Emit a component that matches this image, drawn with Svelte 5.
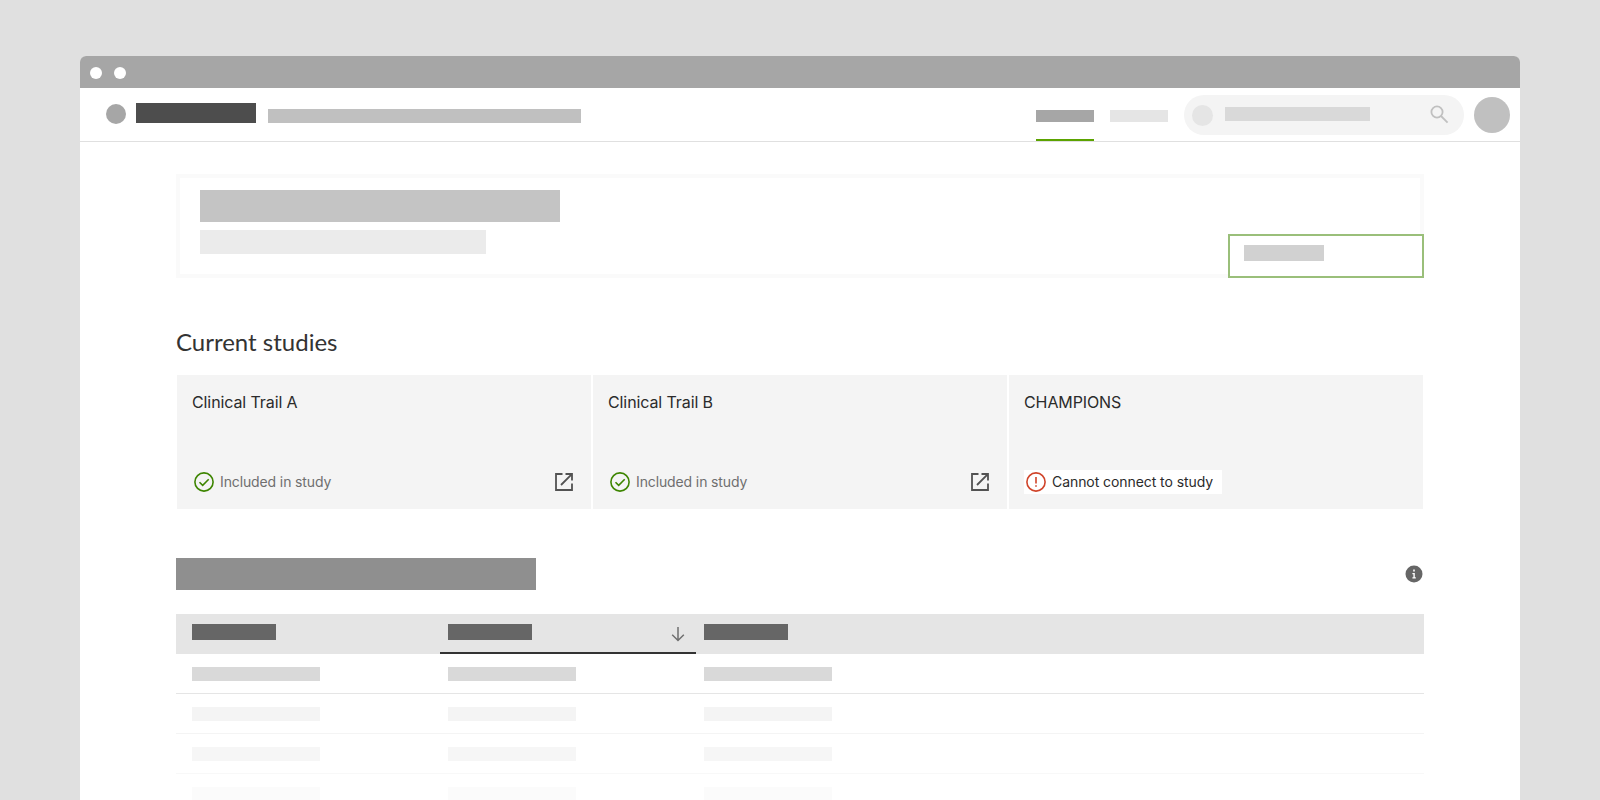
<script>
  const studies = [
    { name: 'Clinical Trail A', ok: true, status: 'Included in study' },
    { name: 'Clinical Trail B', ok: true, status: 'Included in study' },
    { name: 'CHAMPIONS', ok: false, status: 'Cannot connect to study' }
  ];
  const rows = ['r1', 'r2', 'r3', 'r4'];
  const cols = [0, 1, 2];
</script>

<div class="window">
  <div class="titlebar">
    <span class="dot"></span>
    <span class="dot"></span>
  </div>

  <header class="topbar">
    <span class="logo"></span>
    <span class="brand"></span>
    <span class="tagline"></span>
    <nav class="tabs">
      <div class="tab active"><span></span></div>
      <div class="tab"><span></span></div>
    </nav>
    <div class="search">
      <span class="search-dot"></span>
      <span class="search-text"></span>
      <svg class="search-icon" width="20" height="20" viewBox="0 0 20 20" fill="none" stroke="#c0c0c0" stroke-width="1.8">
        <circle cx="8" cy="8" r="5.6" />
        <path d="M12 12l6.6 6.6" />
      </svg>
    </div>
    <span class="avatar"></span>
  </header>

  <main class="content">
    <section class="hero">
      <div>
        <div class="hero-title"></div>
        <div class="hero-sub"></div>
      </div>
      <div class="hero-btn"><span></span></div>
    </section>

    <h2>Current studies</h2>

    <div class="cards">
      {#each studies as study}
        <div class="card">
          <div class="card-name">{study.name}</div>
          <div class="card-foot">
            {#if study.ok}
              <div class="status">
                <svg width="20" height="20" viewBox="0 0 20 20" fill="none" stroke="#3d8500" stroke-width="1.6">
                  <circle cx="10" cy="10" r="9.1" />
                  <path d="M5.5 10.2l3.2 3.2 6-6.2" />
                </svg>
                <span>{study.status}</span>
              </div>
              <svg class="ext" width="18" height="18" viewBox="0 0 18 18" fill="none" stroke="#525252" stroke-width="1.8">
                <path d="M7.5 1H1v16h16v-6.5" />
                <path d="M6 12L16.6 1.4M10.5 1H17v6.5" />
              </svg>
            {:else}
              <div class="status error">
                <svg width="20" height="20" viewBox="0 0 20 20" fill="none" stroke="#d0442a" stroke-width="1.6">
                  <circle cx="10" cy="10" r="9.1" />
                  <path d="M10 5v6.4M10 13.2v1.6" />
                </svg>
                <span>{study.status}</span>
              </div>
            {/if}
          </div>
        </div>
      {/each}
    </div>

    <div class="section-head">
      <div class="section-title"></div>
      <svg class="info" width="18" height="18" viewBox="0 0 18 18">
        <circle cx="9" cy="9" r="8.5" fill="#666" />
        <path d="M7.4 8h2.4v4.2h1v1.2H7.4v-1.2h1V9.2h-1zM8.2 4.6h1.6v1.9H8.2z" fill="#fff" />
      </svg>
    </div>

    <div class="table">
      <div class="row head">
        {#each cols as c}
          <div class="cell" class:sorted={c === 1}>
            <span class="th"></span>
            {#if c === 1}
              <svg class="sort" width="14" height="16" viewBox="0 0 14 16" fill="none" stroke="#6f6f6f" stroke-width="1.5">
                <path d="M7 1v13.5M1.2 8.8L7 14.5l5.8-5.7" />
              </svg>
            {/if}
          </div>
        {/each}
      </div>
      {#each rows as r}
        <div class="row body {r}">
          {#each cols as c}
            <div class="cell"><span class="td"></span></div>
          {/each}
        </div>
      {/each}
    </div>
  </main>
</div>

<style>
  :global(body) {
    background: #e0e0e0;
    height: 800px;
    overflow: hidden;
    font-family: Inter, "Liberation Sans", sans-serif;
  }

  .window {
    margin: 56px 80px 0;
    height: 744px;
    background: #fff;
    border-radius: 6px 6px 0 0;
    overflow: hidden;
  }

  .titlebar {
    height: 32px;
    background: #a6a6a6;
    display: flex;
    align-items: center;
    gap: 12px;
    padding: 2px 0 0 10px;
    box-sizing: border-box;
  }
  .dot {
    width: 12px;
    height: 12px;
    border-radius: 50%;
    background: #fff;
  }

  .topbar {
    height: 53px;
    border-bottom: 1px solid #e0e0e0;
    display: flex;
    position: relative;
  }
  .logo {
    width: 20px;
    height: 20px;
    border-radius: 50%;
    background: #a6a6a6;
    margin: 16px 10px 0 26px;
  }
  .brand {
    width: 120px;
    height: 20px;
    background: #4d4d4d;
    margin-top: 15px;
  }
  .tagline {
    width: 313px;
    height: 14px;
    background: #c0c0c0;
    margin: 21px 0 0 12px;
  }
  .tabs {
    display: flex;
    gap: 16px;
    margin-left: auto;
  }
  .tab {
    width: 58px;
    padding-top: 22px;
  }
  .tab span {
    display: block;
    height: 12px;
    background: #e5e5e5;
  }
  .tab.active {
    border-bottom: 2px solid #5ba300;
    box-sizing: border-box;
  }
  .tab.active span {
    background: #a6a6a6;
  }
  .search {
    width: 280px;
    height: 40px;
    border-radius: 20px;
    background: #f4f4f4;
    margin: 7px 0 0 16px;
    display: flex;
    align-items: center;
    padding: 0 15px 0 8px;
    box-sizing: border-box;
  }
  .search-dot {
    width: 21px;
    height: 21px;
    border-radius: 50%;
    background: #e5e5e5;
  }
  .search-text {
    width: 145px;
    height: 14px;
    background: #d9d9d9;
    margin: -2px 0 0 12px;
  }
  .search-icon {
    margin: -2px 0 0 auto;
  }
  .avatar {
    width: 36px;
    height: 36px;
    border-radius: 50%;
    background: #c0c0c0;
    margin: 9px 10px 0 10px;
  }

  .content {
    padding: 32px 96px 0;
  }

  .hero {
    height: 104px;
    box-sizing: border-box;
    border: 4px solid #fafafa;
    padding: 12px 0 0 20px;
    display: flex;
    justify-content: space-between;
  }
  .hero-title {
    width: 360px;
    height: 32px;
    background: #c4c4c4;
  }
  .hero-sub {
    width: 286px;
    height: 24px;
    background: #ebebeb;
    margin-top: 8px;
  }
  .hero-btn {
    width: 196px;
    height: 44px;
    box-sizing: border-box;
    border: 2px solid #9abf7a;
    background: #fff;
    align-self: flex-end;
    margin: 0 -4px -4px 0;
    padding: 9px 14px;
  }
  .hero-btn span {
    display: block;
    width: 80px;
    height: 16px;
    background: #d1d1d1;
  }

  h2 {
    font-family: Lato, Inter, sans-serif;
    font-size: 24px;
    line-height: 32px;
    font-weight: 400;
    color: #333;
    margin: 48px 0 17px;
  }

  .cards {
    display: grid;
    grid-template-columns: repeat(3, 1fr);
    gap: 2px;
    margin: 0 1px;
  }
  .card {
    height: 134px;
    background: #f4f4f4;
    padding: 0 16px 0 15px;
    display: flex;
    flex-direction: column;
    justify-content: space-between;
  }
  .card-name {
    font-size: 16px;
    line-height: 22px;
    letter-spacing: -0.1px;
    color: #2b2b2b;
    margin-top: 16px;
  }
  .card-foot {
    display: flex;
    justify-content: space-between;
    align-items: center;
    margin-bottom: 15px;
    height: 24px;
  }
  .status {
    display: flex;
    align-items: center;
    gap: 6px;
    font-size: 14px;
    line-height: 24px;
    letter-spacing: -0.12px;
    color: #6f6f6f;
    margin-left: 2px;
  }
  .status.error {
    color: #2b2b2b;
    background: #fff;
    margin-left: 0;
    padding: 0 9px 0 2px;
    letter-spacing: -0.07px;
  }
  .ext {
    margin-right: 2px;
  }

  .section-head {
    display: flex;
    justify-content: space-between;
    align-items: center;
    margin-top: 49px;
    height: 32px;
  }
  .section-title {
    width: 360px;
    height: 32px;
    background: #8f8f8f;
  }
  .info {
    margin-right: 1px;
  }

  .table {
    margin-top: 24px;
  }
  .row {
    display: grid;
    grid-template-columns: 264px 256px 1fr;
    height: 40px;
    box-sizing: border-box;
  }
  .head {
    background: #e5e5e5;
  }
  .cell {
    padding: 0 8px;
    display: flex;
    align-items: flex-start;
    justify-content: space-between;
    position: relative;
  }
  .cell:first-child {
    padding-left: 16px;
  }
  .th {
    width: 84px;
    height: 16px;
    background: #666;
    margin-top: 10px;
  }
  .sort {
    margin: 12px 3px 0 0;
  }
  .sorted {
    border-bottom: 2px solid #333;
  }
  .td {
    width: 128px;
    height: 14px;
    margin-top: 13px;
  }
  .r1 { border-bottom: 1px solid #e5e5e5; }
  .r2 { border-bottom: 1px solid #f4f4f4; }
  .r3 { border-bottom: 1px solid #f8f8f8; }
  .r1 .td { background: #d9d9d9; }
  .r2 .td { background: #f4f4f4; }
  .r3 .td { background: #f6f6f6; }
  .r4 .td { background: #fbfbfb; }
</style>
